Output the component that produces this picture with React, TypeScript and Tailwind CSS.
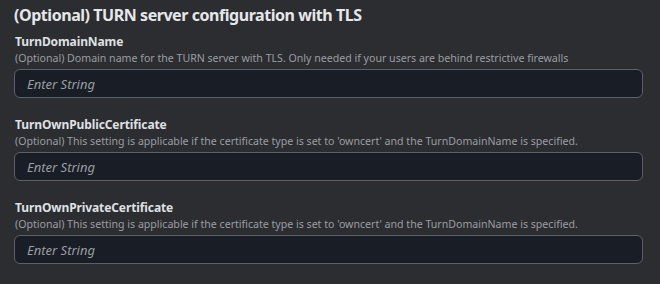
const fields = [
  {
    name: 'TurnDomainName',
    description:
      '(Optional) Domain name for the TURN server with TLS. Only needed if your users are behind restrictive firewalls',
  },
  {
    name: 'TurnOwnPublicCertificate',
    description:
      "(Optional) This setting is applicable if the certificate type is set to 'owncert' and the TurnDomainName is specified.",
  },
  {
    name: 'TurnOwnPrivateCertificate',
    description:
      "(Optional) This setting is applicable if the certificate type is set to 'owncert' and the TurnDomainName is specified.",
  },
];

const App = () => {
  return (
    <div className="min-h-screen bg-[#2b2d31] pl-[14px] pr-[17px] pt-[3px] font-['Noto_Sans',sans-serif]">
      <h2 className="text-[16px] font-bold leading-[24px] tracking-[-0.45px] text-[#e6e7e9]">
        (Optional) TURN server configuration with TLS
      </h2>
      <div className="mt-[7px] flex flex-col gap-[19px]">
        {fields.map((field) => (
          <div key={field.name} className="flex flex-col">
            <label className="pl-px text-[12px] font-bold leading-[16px] tracking-[-0.1px] text-[#dfe0e2]">
              {field.name}
            </label>
            <p className="pl-px text-[10.6px] leading-[16px] text-[#9b9da1]">{field.description}</p>
            <input
              type="text"
              placeholder="Enter String"
              className="mt-[3px] h-[29px] w-full rounded-[6px] border border-[#5d6066] bg-[#181d26] px-[12px] text-[13px] italic text-[#dfe0e2] placeholder:text-[#9b9da1] outline-none"
            />
          </div>
        ))}
      </div>
    </div>
  );
};

export default App;
